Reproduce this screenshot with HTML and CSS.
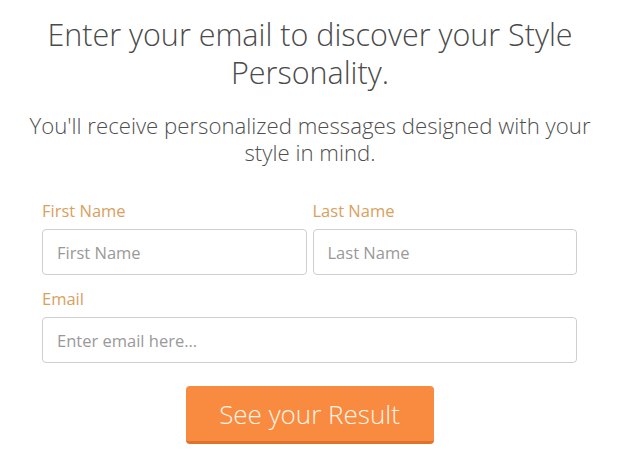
FILE: index.html
```html
<!DOCTYPE html>
<html>
<head>
<meta charset="utf-8">
<link rel="stylesheet" href="styles.css">
</head>
<body>
<div class="wrap">
  <h1 class="title">Enter your email to discover your Style Personality.</h1>
  <p class="sub">You'll receive personalized messages designed with your style in mind.</p>
  <form class="form">
    <div class="row">
      <div class="field">
        <label class="label">First Name</label>
        <input class="input" placeholder="First Name">
      </div>
      <div class="field">
        <label class="label">Last Name</label>
        <input class="input" placeholder="Last Name">
      </div>
    </div>
    <div class="field">
      <label class="label">Email</label>
      <input class="input" placeholder="Enter email here...">
    </div>
    <div class="actions">
      <button type="button" class="btn">See your Result</button>
    </div>
  </form>
</div>
</body>
</html>
```
FILE: styles.css
```css
html, body { margin: 0; padding: 0; background: #fff; }
body { font-family: "Open Sans", Lato, sans-serif; color: #555; }
.wrap { width: 620px; box-sizing: border-box; padding: 15px 0 0; }
.title { margin: 0 auto; width: 600px; text-align: center; font-weight: 300; font-size: 30.5px; line-height: 38px; color: #4a4a4a; }
.sub { margin: 21px auto 0; width: 600px; text-align: center; font-weight: 300; font-size: 22.2px; line-height: 27px; color: #4f4f4f; }
.form { margin: 35px 43px 0 42px; display: flex; flex-direction: column; gap: 14px; }
.row { display: flex; gap: 6px; }
.row .field { flex: 1; }
.field { display: flex; flex-direction: column; gap: 8px; }
.label { color: #d9a05e; font-size: 16.5px; line-height: 20px; }
.input { height: 46px; box-sizing: border-box; border: 1px solid #cfcfcf; border-radius: 4px; padding: 0 14px; font-family: "Open Sans", sans-serif; font-size: 16.5px; color: #555; outline: none; width: 100%; }
.input::placeholder { color: #999; }
.actions { display: flex; justify-content: center; margin-top: 9px; }
.btn { width: 248px; height: 58px; border: none; border-bottom: 3px solid #e0722c; border-radius: 4px; background: #f98b40; color: #fff5ea; font-family: "Open Sans", sans-serif; font-weight: 300; font-size: 26px; cursor: pointer; padding: 0; }
```
